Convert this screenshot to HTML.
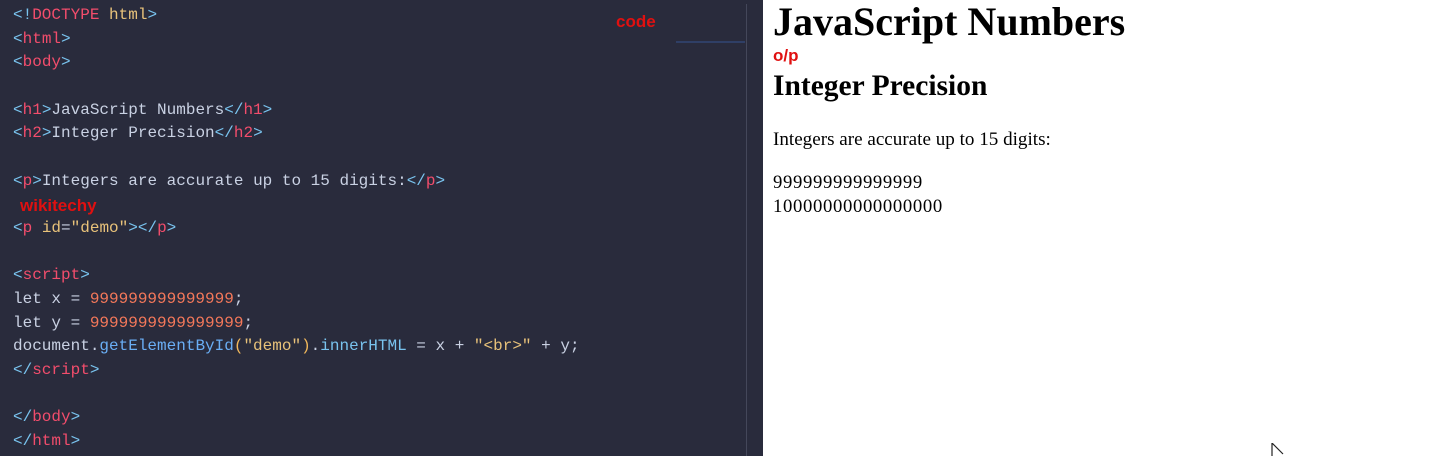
<!DOCTYPE html>
<html><head><style>
body{margin:0;width:1445px;height:456px;overflow:hidden;background:#fff;position:relative}
#ed{position:absolute;left:0;top:0;width:763px;height:456px;background:#292b3c}
#code{position:absolute;left:13px;top:4px;font:16px/23.67px "Liberation Mono",monospace;color:#c9d1e3;white-space:pre;margin:0}
.b{color:#79c3ee}.t{color:#f24d6c}.s{color:#e8c27a}.n{color:#f4785a}.f{color:#6aaef5}.a{color:#f0b75b}
.lbl{position:absolute;color:#e01010;font:bold 17px "Liberation Sans",sans-serif}
#vl{position:absolute;left:746px;top:4px;width:1px;height:452px;background:#44475a}
#mm{position:absolute;left:676px;top:41px;width:69px;height:2px;background:#2f3f66}
#out{position:absolute;left:773px;top:0;font-family:"Liberation Serif",serif;color:#000}
</style></head><body>
<div id="ed">
<pre id="code"><span class="b">&lt;!</span><span class="t">DOCTYPE</span> <span class="s">html</span><span class="b">&gt;</span>
<span class="b">&lt;</span><span class="t">html</span><span class="b">&gt;</span>
<span class="b">&lt;</span><span class="t">body</span><span class="b">&gt;</span>

<span class="b">&lt;</span><span class="t">h1</span><span class="b">&gt;</span>JavaScript Numbers<span class="b">&lt;/</span><span class="t">h1</span><span class="b">&gt;</span>
<span class="b">&lt;</span><span class="t">h2</span><span class="b">&gt;</span>Integer Precision<span class="b">&lt;/</span><span class="t">h2</span><span class="b">&gt;</span>

<span class="b">&lt;</span><span class="t">p</span><span class="b">&gt;</span>Integers are accurate up to 15 digits:<span class="b">&lt;/</span><span class="t">p</span><span class="b">&gt;</span>

<span class="b">&lt;</span><span class="t">p</span> <span class="s">id</span>=<span class="s">"demo"</span><span class="b">&gt;&lt;/</span><span class="t">p</span><span class="b">&gt;</span>

<span class="b">&lt;</span><span class="t">script</span><span class="b">&gt;</span>
let x = <span class="n">999999999999999</span>;
let y = <span class="n">9999999999999999</span>;
document.<span class="f">getElementById</span><span class="a">(</span><span class="s">"demo"</span><span class="a">)</span>.<span class="b">innerHTML</span> = x + <span class="s">"&lt;br&gt;"</span> + y;
<span class="b">&lt;/</span><span class="t">script</span><span class="b">&gt;</span>

<span class="b">&lt;/</span><span class="t">body</span><span class="b">&gt;</span>
<span class="b">&lt;/</span><span class="t">html</span><span class="b">&gt;</span></pre>
<div class="lbl" style="left:20px;top:196px">wikitechy</div>
<div class="lbl" style="left:616px;top:12px">code</div>
<div id="vl"></div><div id="mm"></div>
</div>
<div id="out">
<div style="position:absolute;top:-2px;left:0;font:bold 40px 'Liberation Serif',serif;white-space:nowrap">JavaScript Numbers</div>
<div style="position:absolute;top:46px;left:0;font:bold 17px 'Liberation Sans',sans-serif;color:#e01010">o/p</div>
<div style="position:absolute;top:70px;left:0;font:bold 29.5px 'Liberation Serif',serif;white-space:nowrap">Integer Precision</div>
<div style="position:absolute;top:129px;left:0;font:19.1px 'Liberation Serif',serif;white-space:nowrap">Integers are accurate up to 15 digits:</div>
<div style="position:absolute;top:171px;left:0;font:18.7px/24px 'Liberation Serif',serif;white-space:nowrap;letter-spacing:0.65px">999999999999999<br>10000000000000000</div>
</div>
<svg style="position:absolute;left:1271px;top:443px" width="14" height="14"><path d="M1 0V13M1 0L12 11" stroke="#222" stroke-width="1.2" fill="none"/></svg>
</body></html>
